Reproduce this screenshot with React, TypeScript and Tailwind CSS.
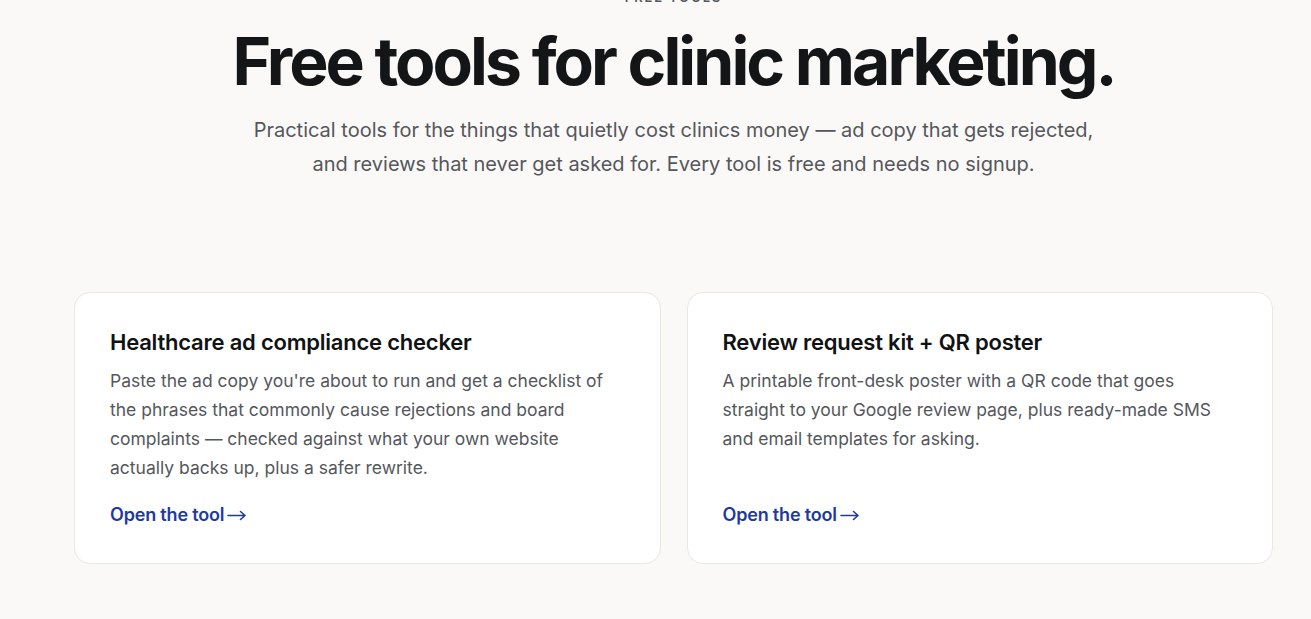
const tools = [
  {
    title: 'Healthcare ad compliance checker',
    body: "Paste the ad copy you're about to run and get a checklist of the phrases that commonly cause rejections and board complaints — checked against what your own website actually backs up, plus a safer rewrite.",
  },
  {
    title: 'Review request kit + QR poster',
    body: 'A printable front-desk poster with a QR code that goes straight to your Google review page, plus ready-made SMS and email templates for asking.',
  },
];

function ArrowRight() {
  return (
    <svg width="20" height="12" viewBox="0 0 20 12" fill="none" className="ml-[3px] inline-block">
      <path d="M1 6.5h17M13.5 2.5l4.5 4-4.5 4" stroke="currentColor" strokeWidth="1.6" strokeLinecap="round" strokeLinejoin="round" />
    </svg>
  );
}

function ToolCard({ title, body }: { title: string; body: string }) {
  return (
    <a
      href="#"
      className="flex min-h-[272px] flex-col rounded-[16px] border border-[#ebe6df] bg-white px-[35px] pt-[34px] pb-[35px]"
    >
      <h3 className="text-[22px] font-semibold leading-[30px] tracking-[-0.01em] text-[#111214]">{title}</h3>
      <p className="mt-[9px] text-[17.5px] leading-[29px] text-[#55575c]">{body}</p>
      <span className="mt-auto flex items-center pt-4 text-[18px] font-semibold leading-[26px] tracking-[-0.01em] text-[#1e3a9e]">
        Open the tool
        <ArrowRight />
      </span>
    </a>
  );
}

export default function App() {
  return (
    <div
      className="min-h-screen overflow-hidden bg-[#faf9f7]"
      style={{ fontFamily: 'Inter, "Noto Sans", sans-serif' }}
    >
      <div className="ml-[74px] mr-[38px]">
        <div className="-mt-[10px] text-center">
          <p className="text-[13px] font-semibold uppercase leading-[14px] tracking-[0.14em] text-[#55575c]">
            Free tools
          </p>
          <h1 className="mt-[16px] text-[66px] font-bold leading-[82px] tracking-[-0.045em] text-[#141517]">
            Free tools for clinic marketing.
          </h1>
          <p className="mx-auto mt-[11px] max-w-[860px] text-[20px] leading-[34px] text-[#55575c]">
            Practical tools for the things that quietly cost clinics money — ad copy that gets rejected, and
            reviews that never get asked for. Every tool is free and needs no signup.
          </p>
        </div>
        <div className="mt-[111px] grid grid-cols-2 gap-[26px]">
          {tools.map((t) => (
            <ToolCard key={t.title} {...t} />
          ))}
        </div>
      </div>
    </div>
  );
}
